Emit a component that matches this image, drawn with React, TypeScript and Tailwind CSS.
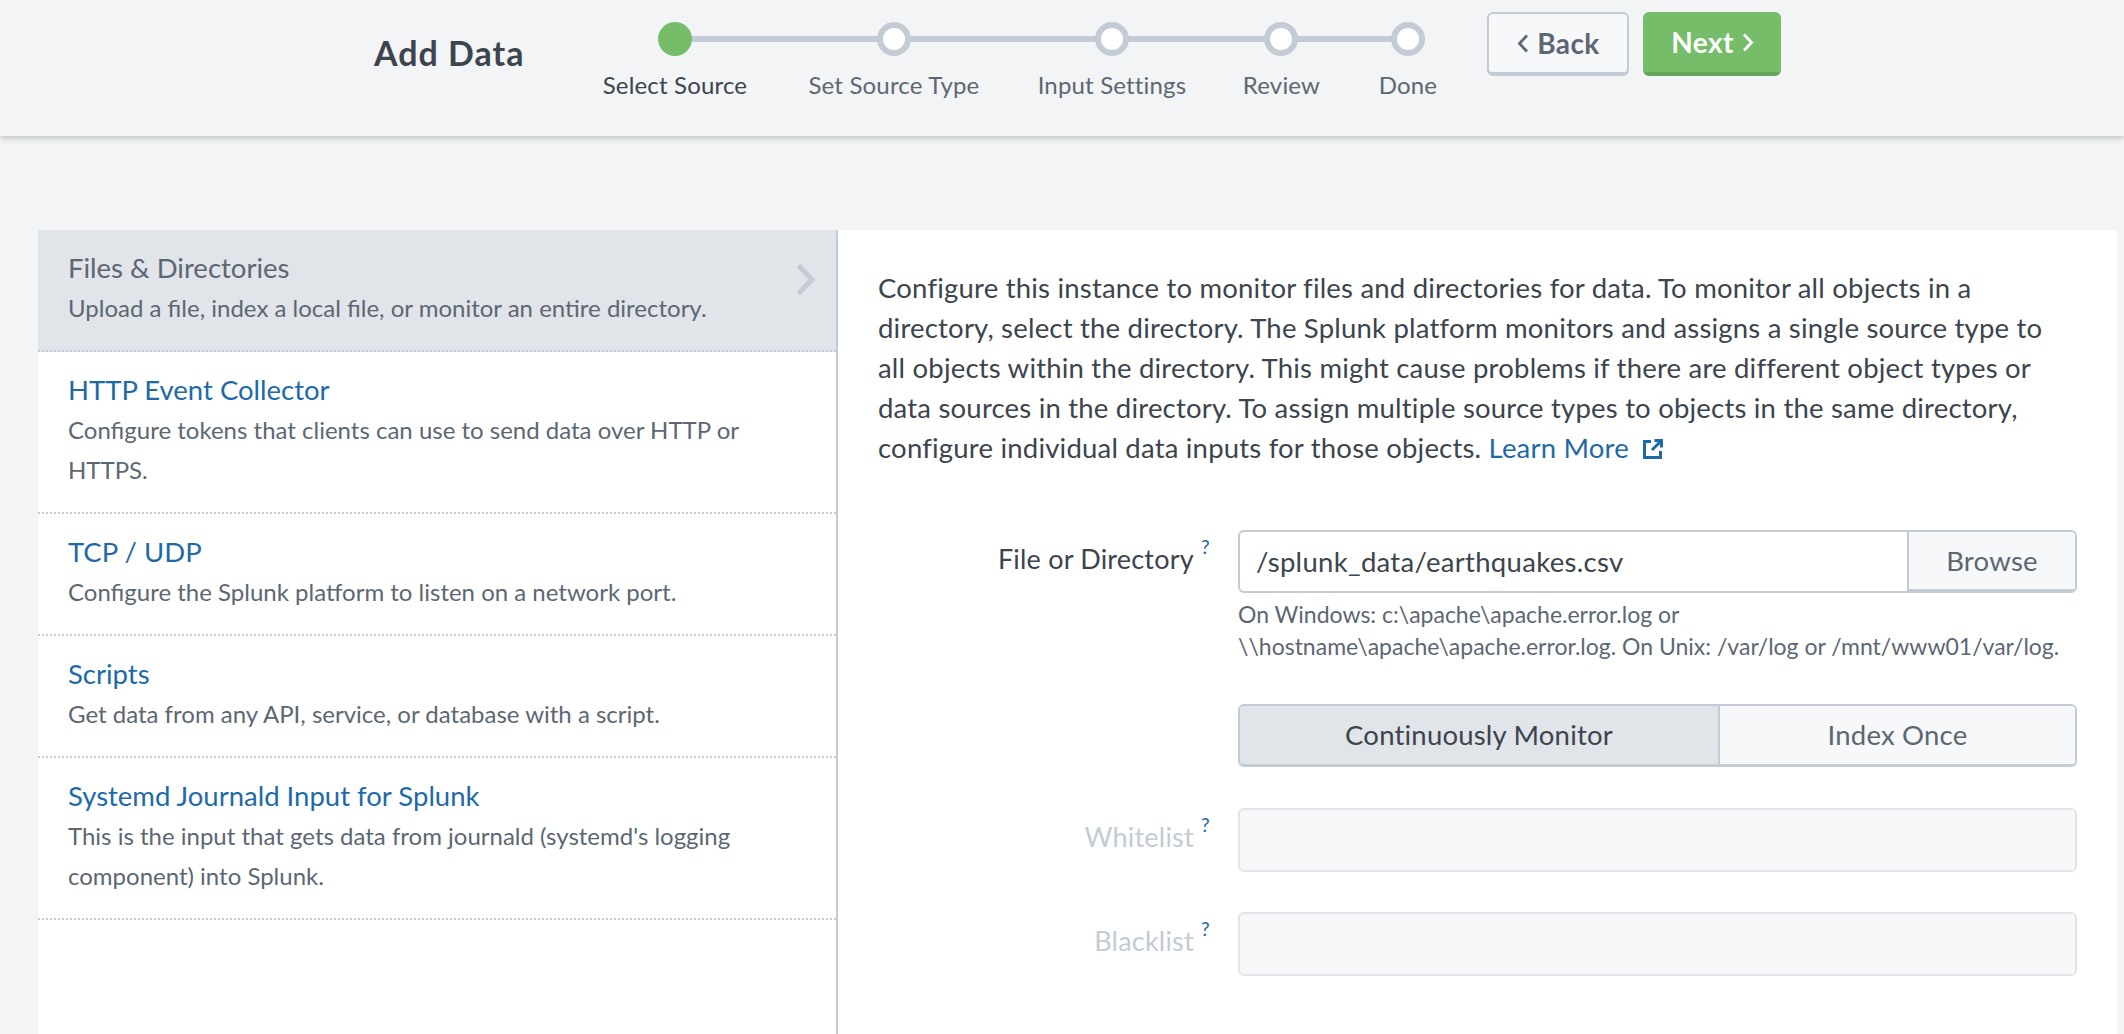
import React from 'react';

const FONT = "font-['Lato','Open_Sans',sans-serif]";

const steps = [
  { label: 'Select Source', done: true, width: 'w-[145px]' },
  { label: 'Set Source Type', done: false, width: 'w-[173px]' },
  { label: 'Input Settings', done: false, width: 'w-[143px]' },
  { label: 'Review', done: false, width: 'w-[76px]' },
  { label: 'Done', done: false, width: 'w-[57px]' },
];

const sources = [
  { title: 'Files & Directories', lines: ['Upload a file, index a local file, or monitor an entire directory.'], active: true },
  { title: 'HTTP Event Collector', lines: ['Configure tokens that clients can use to send data over HTTP or', 'HTTPS.'] },
  { title: 'TCP / UDP', lines: ['Configure the Splunk platform to listen on a network port.'] },
  { title: 'Scripts', lines: ['Get data from any API, service, or database with a script.'] },
  { title: 'Systemd Journald Input for Splunk', lines: ["This is the input that gets data from journald (systemd's logging", 'component) into Splunk.'] },
];

function Chevron({ dir, className }: { dir: 'left' | 'right'; className?: string }) {
  return (
    <svg viewBox="0 0 12 19" className={className} fill="none" stroke="currentColor" strokeWidth="2.8">
      <path d={dir === 'left' ? 'M10 1.5 2.5 9.5l7.5 8' : 'M2 1.5l7.5 8-7.5 8'} />
    </svg>
  );
}

function Wizard() {
  return (
    <div className="relative flex gap-[60px] pt-[22px]">
      <div className="absolute left-[70px] top-[36px] h-[6px] w-[736px] bg-[#c3cbd4]" />
      {steps.map((s) => (
        <div key={s.label} className={`relative flex flex-col items-center ${s.width}`}>
          <div className={s.done ? 'h-[34px] w-[34px] rounded-full bg-[#75bd69]' : 'h-[34px] w-[34px] rounded-full border-[6px] border-[#c3cbd4] bg-white'} />
          <div className={s.done ? 'mt-[13px] whitespace-nowrap text-[24px] leading-[32px] tracking-[0.17px] text-[#3c444d]' : 'mt-[13px] whitespace-nowrap text-[24px] leading-[32px] tracking-[0.17px] text-[#5c6773]'}>{s.label}</div>
        </div>
      ))}
    </div>
  );
}

function SourceRow({ title, lines, active }: { title: string; lines: string[]; active?: boolean }) {
  return (
    <div className={active ? 'relative border-b-2 border-dotted border-[#c3cbd4] bg-[#e1e4e8] pl-[30px] pt-[18px] pb-[22px]' : 'border-b-2 border-dotted border-[#c3cbd4] pl-[30px] pt-[18px] pb-[22px]'}>
      <div className={active ? 'text-[27.5px] leading-[40px] text-[#5c6773]' : 'text-[27.5px] leading-[40px] text-[#1e6aa8]'}>{title}</div>
      {lines.map((l) => (
        <div key={l} className="text-[24px] leading-[40px] text-[#5c6773]">{l}</div>
      ))}
      {active && (
        <svg viewBox="0 0 19 33" className="absolute left-[758px] top-[33px] h-[33px] w-[19px] text-[#c3cbd4]" fill="none" stroke="currentColor" strokeWidth="5">
          <path d="M2.5 2.5 16 16.5 2.5 30.5" />
        </svg>
      )}
    </div>
  );
}

function FieldLabel({ text, muted }: { text: string; muted?: boolean }) {
  return (
    <div className={muted ? 'w-[360px] pr-[28px] pt-[9px] text-right text-[27px] leading-[40px] tracking-[0.2px] text-[#c3cbd4]' : 'w-[360px] pr-[28px] pt-[9px] text-right text-[27px] leading-[40px] tracking-[0.2px] text-[#3c444d]'}>
      {text}
      <sup className="top-[-15px] ml-[7px] text-[20px] text-[#1e6aa8]">?</sup>
    </div>
  );
}

export default function App() {
  return (
    <div className={`${FONT} h-[1034px] overflow-hidden bg-[#f2f4f5]`}>
      <header className="flex h-[136px] bg-[#f2f4f5] pl-[374px] shadow-[0_2px_6px_rgba(60,68,77,0.3)]">
        <h1 className="mr-[78px] mt-[31px] h-fit text-[34px] font-bold leading-[44px] tracking-[1px] text-[#3c444d]">Add Data</h1>
        <Wizard />
        <div className="ml-[51px] flex gap-[14px] pt-[12px]">
          <button className="flex h-[64px] w-[142px] items-center justify-center gap-[8px] rounded-[6px] border-2 border-b-4 border-[#c3cbd4] bg-[#f7f8fa] text-[28px] font-bold tracking-[0.4px] text-[#5c6773]">
            <Chevron dir="left" className="h-[19px] w-[12px]" />
            Back
          </button>
          <button className="flex h-[64px] w-[138px] items-center justify-center gap-[8px] rounded-[6px] border-b-4 border-[#66a55c] bg-[#75bd69] text-[28px] font-bold tracking-[0.4px] text-white">
            Next
            <Chevron dir="right" className="h-[19px] w-[12px]" />
          </button>
        </div>
      </header>

      <main className="ml-[38px] mr-[7px] mt-[94px] flex h-[810px] bg-white">
        <aside className="w-[800px] shrink-0 border-r-2 border-[#c3cbd4]">
          {sources.map((s) => (
            <SourceRow key={s.title} {...s} />
          ))}
        </aside>

        <section className="flex-1 pl-[40px] pr-[40px] pt-[38px]">
          <p className="whitespace-nowrap text-[27.5px] leading-[40px] tracking-[0.2px] text-[#3c444d]">
            Configure this instance to monitor files and directories for data. To monitor all objects in a<br />
            directory, select the directory. The Splunk platform monitors and assigns a single source type to<br />
            all objects within the directory. This might cause problems if there are different object types or<br />
            data sources in the directory. To assign multiple source types to objects in the same directory,<br />
            configure individual data inputs for those objects.{' '}
            <a className="text-[#1e6aa8]">
              Learn More
              <svg viewBox="0 0 20 20" className="ml-[14px] inline-block h-[20px] w-[20px] align-[-1px]" fill="none" stroke="currentColor" strokeWidth="3">
                <path d="M8 2.5H1.5v16h16V12M11.5 1.5h7v7M18 2l-9 9" />
              </svg>
            </a>
          </p>

          <div className="mt-[62px] flex">
            <FieldLabel text="File or Directory" />
            <div className="flex-1">
              <div className="flex h-[63px] overflow-hidden rounded-[6px] border-2 border-[#c3cbd4]">
                <div className="flex flex-1 items-center pl-[16px] text-[27.5px] tracking-[0.3px] text-[#3c444d]">/splunk_data/earthquakes.csv</div>
                <div className="flex w-[168px] items-center justify-center border-b-2 border-l-2 border-[#c3cbd4] bg-[#f7f8fa] text-[27.5px] tracking-[0.24px] text-[#5c6773]">Browse</div>
              </div>
              <p className="mt-[5px] whitespace-nowrap text-[23px] leading-[32px] text-[#5c6773]">
                On Windows: c:\apache\apache.error.log or<br />
                \\hostname\apache\apache.error.log. On Unix: /var/log or /mnt/www01/var/log.
              </p>
            </div>
          </div>

          <div className="mt-[42px] flex pl-[360px]">
            <div className="flex h-[63px] flex-1 overflow-hidden rounded-[6px] border-2 border-b-[3px] border-[#c3cbd4] text-[27.5px] tracking-[0.2px]">
              <div className="flex w-[478px] items-center justify-center bg-[#e1e4e8] text-[#3c444d]">Continuously Monitor</div>
              <div className="flex flex-1 items-center justify-center border-l-2 border-[#c3cbd4] bg-[#f7f8fa] text-[#5c6773]">Index Once</div>
            </div>
          </div>

          <div className="mt-[41px] flex">
            <FieldLabel text="Whitelist" muted />
            <div className="h-[64px] flex-1 rounded-[6px] border-2 border-[#e1e4e8] bg-[#f7f8fa]" />
          </div>
          <div className="mt-[40px] flex">
            <FieldLabel text="Blacklist" muted />
            <div className="h-[64px] flex-1 rounded-[6px] border-2 border-[#e1e4e8] bg-[#f7f8fa]" />
          </div>
        </section>
      </main>
    </div>
  );
}
